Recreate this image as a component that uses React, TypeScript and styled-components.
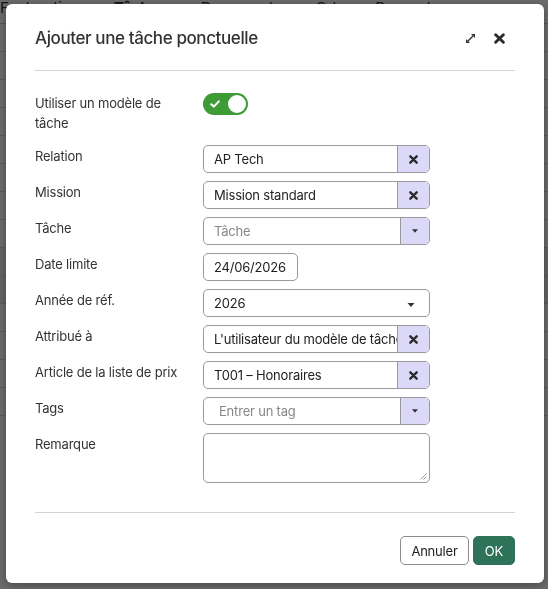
import React from 'react'
import styled, { createGlobalStyle } from 'styled-components'

const GlobalStyle = createGlobalStyle`
  html, body {
    margin: 0;
    padding: 0;
    width: 548px;
    height: 589px;
    overflow: hidden;
    font-family: Inter, "Liberation Sans", sans-serif;
    background: #ffffff;
  }
`

const Page = styled.div`
  width: 548px;
  height: 589px;
  overflow: hidden;
  background: #fff;
`

const Tabs = styled.div`
  display: flex;
  gap: 34px;
  margin-top: -9px;
  height: 32px;
  border-bottom: 1px solid #ccc;
  font-size: 15px;
  color: #333;
  align-items: center;
`

const Tab = styled.span<{ active?: boolean }>`
  font-weight: ${(p) => (p.active ? 700 : 400)};
`

const BgRow = styled.div<{ shade?: boolean }>`
  height: 27px;
  border-bottom: 1px solid #d6d6d6;
  background: ${(p) => (p.shade ? '#eee' : '#fff')};
  font-size: 14px;
  color: #333;
  display: flex;
  justify-content: space-between;
  align-items: center;
`

const Overlay = styled.div`
  position: fixed;
  inset: 0;
  background: rgba(0, 0, 0, 0.58);
`

const Modal = styled.div`
  position: fixed;
  left: 6px;
  top: 4px;
  width: 538px;
  height: 579px;
  box-sizing: border-box;
  background: #fff;
  border-radius: 6px;
  box-shadow: 0 2px 10px rgba(0, 0, 0, 0.35);
  padding: 0 29px 20px;
  display: flex;
  flex-direction: column;
`

const Header = styled.div`
  display: flex;
  align-items: center;
  justify-content: space-between;
  padding-top: 22px;
  height: 24px;
  margin-bottom: 20px;
`

const Title = styled.h2`
  margin: 0;
  font-size: 17px;
  font-weight: 500;
  letter-spacing: -0.4px;
  color: #333;
  line-height: 24px;
`

const HeaderIcons = styled.div`
  display: flex;
  align-items: center;
  gap: 18px;
  margin-right: 10px;
`

const Divider = styled.hr`
  margin: 0;
  border: none;
  border-top: 1px solid #d4d4d4;
`

const Form = styled.div`
  display: grid;
  grid-template-columns: 168px 227px;
  row-gap: 8px;
  padding-top: 22px;
  margin-bottom: 29px;
`

const Label = styled.div<{ tall?: boolean }>`
  font-size: 13px;
  letter-spacing: -0.2px;
  line-height: 20px;
  color: #333;
  padding-top: ${(p) => (p.tall ? '0' : '1px')};
  padding-right: 12px;
  min-height: ${(p) => (p.tall ? '44px' : '0')};
`

const Field = styled.div<{ width?: number }>`
  display: flex;
  width: ${(p) => (p.width ? `${p.width}px` : '100%')};
  height: 28px;
  box-sizing: border-box;
  border: 1px solid #9a9a9a;
  border-radius: 5px;
  overflow: hidden;
  background: #fff;
`

const FieldText = styled.div<{ placeholder?: boolean; indent?: number }>`
  flex: 1;
  min-width: 0;
  display: flex;
  align-items: center;
  padding-left: ${(p) => p.indent ?? 10}px;
  padding-right: 4px;
  font-size: 13px;
  letter-spacing: -0.2px;
  color: ${(p) => (p.placeholder ? '#888' : '#222')};
  white-space: nowrap;
  overflow: hidden;
`

const Addon = styled.div<{ narrow?: boolean }>`
  width: ${(p) => (p.narrow ? '28px' : '31px')};
  flex-shrink: 0;
  border-left: 1px solid #9a9a9a;
  background: #dcd8f7;
  display: flex;
  align-items: center;
  justify-content: center;
`

const Caret = styled.div`
  display: flex;
  align-items: center;
  padding: 3px 14px 0 0;
`

const TextArea = styled.div`
  position: relative;
  width: 227px;
  height: 50px;
  box-sizing: border-box;
  border: 1px solid #9a9a9a;
  border-radius: 5px;
`

const Grip = styled.svg`
  position: absolute;
  right: 2px;
  bottom: 2px;
`

const Switch = styled.div`
  width: 45px;
  height: 22px;
  border-radius: 11px;
  background: #3f9b35;
  display: flex;
  align-items: center;
  justify-content: space-between;
  padding: 0 2px 0 7px;
  box-sizing: border-box;
`

const Knob = styled.div`
  width: 18px;
  height: 18px;
  border-radius: 50%;
  background: #fff;
`

const Footer = styled.div`
  display: flex;
  justify-content: flex-end;
  gap: 4px;
  margin-top: 23px;
`

const Button = styled.button<{ primary?: boolean }>`
  height: 29px;
  padding: 0 10px;
  font-family: Inter, "Liberation Sans", sans-serif;
  font-size: 13px;
  letter-spacing: -0.2px;
  border-radius: 5px;
  border: 1px solid ${(p) => (p.primary ? '#2e725a' : '#8d8d8d')};
  background: ${(p) => (p.primary ? '#2e725a' : '#fff')};
  color: ${(p) => (p.primary ? '#fff' : '#222')};
  min-width: ${(p) => (p.primary ? '42px' : '69px')};
`

const XIcon = ({ size = 9 }: { size?: number }) => (
  <svg width={size} height={size} viewBox="0 0 10 10">
    <path d="M1.5 1.5 L8.5 8.5 M8.5 1.5 L1.5 8.5" stroke="#2a2a2a" strokeWidth="2.6" strokeLinecap="round" />
  </svg>
)

const DownCaret = ({ w = 7 }: { w?: number }) => (
  <svg width={w} height={4} viewBox="0 0 7 4">
    <path d="M0 0 H7 L3.5 4 Z" fill="#333" />
  </svg>
)

const ClearField = ({ value }: { value: string }) => (
  <Field>
    <FieldText>{value}</FieldText>
    <Addon><XIcon /></Addon>
  </Field>
)

const App = () => {
  return (
    <>
      <GlobalStyle />
      <Page>
        <Tabs>
          <Tab>Facturation</Tab>
          <Tab active>Tâches</Tab>
          <Tab>Documents</Tab>
          <Tab>Crh</Tab>
          <Tab>Rapports</Tab>
        </Tabs>
        <BgRow />
        <BgRow />
        <BgRow />
        <BgRow />
        <BgRow />
        <BgRow />
        <BgRow />
        <BgRow />
        <BgRow shade />
        <BgRow shade />
        <BgRow />
        <BgRow />
        <BgRow />
        <BgRow />
      </Page>
      <Overlay />
      <Modal>
        <Header>
          <Title>Ajouter une tâche ponctuelle</Title>
          <HeaderIcons>
            <svg width="11" height="11" viewBox="0 0 11 11">
              <path d="M3 8 L8 3" stroke="#333" strokeWidth="1.4" />
              <path d="M6 1 H10 V5 Z" fill="#333" />
              <path d="M1 6 V10 H5 Z" fill="#333" />
            </svg>
            <XIcon size={11} />
          </HeaderIcons>
        </Header>
        <Divider />
        <Form>
          <Label tall>Utiliser un modèle de tâche</Label>
          <div>
            <Switch>
              <svg width="10" height="8" viewBox="0 0 10 8">
                <path d="M1.2 4.2 L3.8 6.6 L8.8 1.4" stroke="#fff" strokeWidth="2" fill="none" strokeLinecap="round" strokeLinejoin="round" />
              </svg>
              <Knob />
            </Switch>
          </div>

          <Label>Relation</Label>
          <ClearField value="AP Tech" />

          <Label>Mission</Label>
          <ClearField value="Mission standard" />

          <Label>Tâche</Label>
          <Field>
            <FieldText placeholder>Tâche</FieldText>
            <Addon narrow><DownCaret w={6} /></Addon>
          </Field>

          <Label>Date limite</Label>
          <Field width={95}>
            <FieldText>24/06/2026</FieldText>
          </Field>

          <Label>Année de réf.</Label>
          <Field>
            <FieldText>2026</FieldText>
            <Caret><DownCaret w={8} /></Caret>
          </Field>

          <Label>Attribué à</Label>
          <ClearField value="L'utilisateur du modèle de tâche" />

          <Label>Article de la liste de prix</Label>
          <ClearField value="T001 – Honoraires" />

          <Label>Tags</Label>
          <Field>
            <FieldText placeholder indent={15}>Entrer un tag</FieldText>
            <Addon narrow><DownCaret w={6} /></Addon>
          </Field>

          <Label>Remarque</Label>
          <TextArea>
            <Grip width="7" height="7" viewBox="0 0 7 7">
              <path d="M6.5 0.5 L0.5 6.5 M6.5 3.5 L3.5 6.5" stroke="#888" strokeWidth="0.8" />
            </Grip>
          </TextArea>
        </Form>
        <Divider />
        <Footer>
          <Button>Annuler</Button>
          <Button primary>OK</Button>
        </Footer>
      </Modal>
    </>
  )
}

export default App
